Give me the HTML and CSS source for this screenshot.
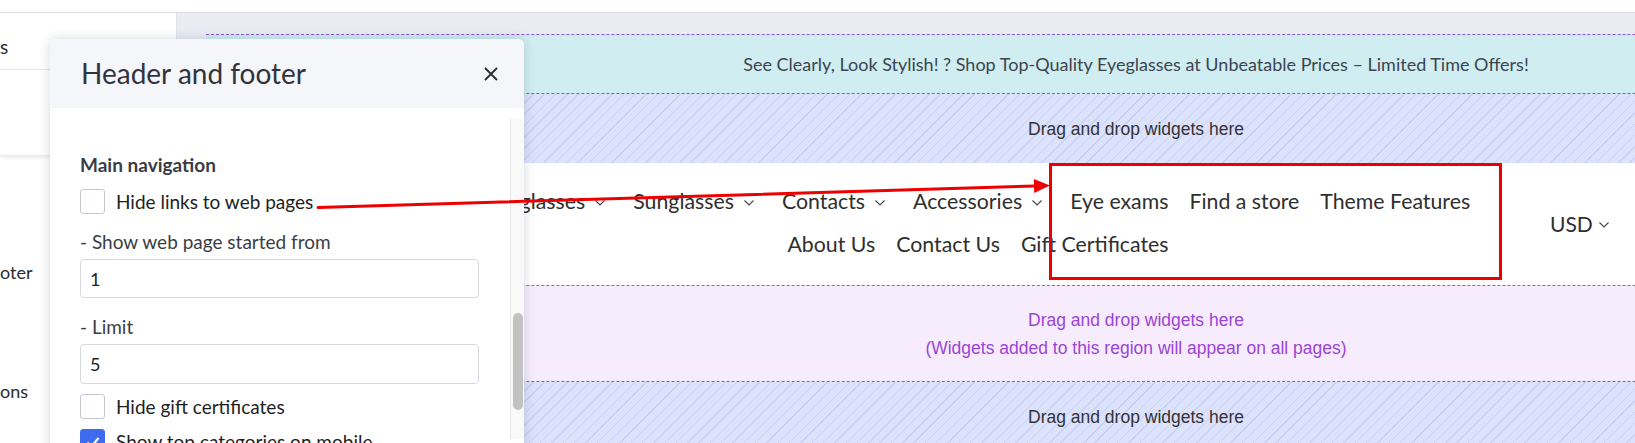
FILE: index.html
```html
<!DOCTYPE html>
<html lang="en">
<head>
<meta charset="utf-8">
<title>Page builder – Header and footer</title>
<link rel="stylesheet" href="styles.css">
</head>
<body>
<div class="app">
  <div class="topbar"></div>
  <div class="workspace">
    <aside class="sidebar">
      <div class="side-menu">
        <div class="side-menu-item">s</div>
      </div>
      <div class="side-list">
        <div class="side-link side-link-1">oter</div>
        <div class="side-link side-link-2">ons</div>
      </div>
    </aside>
    <main class="main">
      <div class="canvas">
        <div class="banner">See Clearly, Look Stylish! ? Shop Top-Quality Eyeglasses at Unbeatable Prices – Limited Time Offers!</div>
        <div class="dropzone dropzone-top">Drag and drop widgets here</div>
        <header class="site-header">
          <div class="logo-slot"></div>
          <nav class="site-nav">
            <a class="nav-item has-menu">Eyeglasses <svg class="chev" viewBox="0 0 10 6"><polyline points="0.5,0.5 5,5 9.5,0.5"/></svg></a>
            <a class="nav-item has-menu">Sunglasses <svg class="chev" viewBox="0 0 10 6"><polyline points="0.5,0.5 5,5 9.5,0.5"/></svg></a>
            <a class="nav-item has-menu">Contacts <svg class="chev" viewBox="0 0 10 6"><polyline points="0.5,0.5 5,5 9.5,0.5"/></svg></a>
            <a class="nav-item has-menu">Accessories <svg class="chev" viewBox="0 0 10 6"><polyline points="0.5,0.5 5,5 9.5,0.5"/></svg></a>
            <a class="nav-item">Eye exams</a>
            <a class="nav-item">Find a store</a>
            <a class="nav-item">Theme Features</a>
            <a class="nav-item">About Us</a>
            <a class="nav-item">Contact Us</a>
            <a class="nav-item">Gift Certificates</a>
          </nav>
          <div class="spacer"></div>
          <div class="currency">USD <svg class="chev" viewBox="0 0 10 6"><polyline points="0.5,0.5 5,5 9.5,0.5"/></svg></div>
        </header>
        <div class="dropzone dropzone-global">
          <div>Drag and drop widgets here</div>
          <div>(Widgets added to this region will appear on all pages)</div>
        </div>
        <div class="dropzone dropzone-bottom">Drag and drop widgets here</div>
      </div>
    </main>
  </div>

  <section class="modal">
    <div class="modal-head">
      <h2 class="modal-title">Header and footer</h2>
      <svg class="modal-close" viewBox="0 0 14 14"><path d="M1 1 L13 13 M13 1 L1 13"/></svg>
    </div>
    <div class="modal-body">
      <div class="modal-content">
        <div class="group-title">Main navigation</div>
        <label class="check-row check-row-1"><span class="checkbox"></span>Hide links to web pages</label>
        <div class="field-label field-label-1">- Show web page started from</div>
        <div class="input">1</div>
        <div class="field-label field-label-2">- Limit</div>
        <div class="input input-2">5</div>
        <label class="check-row check-row-2"><span class="checkbox"></span>Hide gift certificates</label>
        <label class="check-row check-row-3"><span class="checkbox checked"><svg viewBox="0 0 16 16"><polyline points="3,8.5 6.5,12 13,4.5"/></svg></span>Show top categories on mobile</label>
      </div>
      <div class="scroll-track"><div class="scroll-thumb"></div></div>
    </div>
  </section>

  <svg class="annotation" viewBox="0 0 1635 443" width="1635" height="443">
    <rect x="1050.5" y="164.5" width="450" height="114" fill="none" stroke="#ee0000" stroke-width="3"/>
    <line x1="318" y1="207.5" x2="1036" y2="186" stroke="#ee0000" stroke-width="3" stroke-linecap="round"/>
    <polygon points="1050,185.5 1033.8,179 1034.2,193" fill="#ee0000"/>
  </svg>
</div>
</body>
</html>
```

FILE: styles.css
```css
* { box-sizing: border-box; }

html, body {
  margin: 0;
  padding: 0;
}

body {
  width: 1635px;
  height: 443px;
  overflow: hidden;
  background: #ffffff;
  font-family: "Lato", "Noto Sans", sans-serif;
  color: #333;
}

.app {
  position: relative;
  width: 1635px;
  height: 443px;
  display: flex;
  flex-direction: column;
}

.topbar {
  height: 13px;
  flex: none;
  background: #ffffff;
  border-bottom: 1px solid #dcdde0;
}

.workspace {
  flex: 1;
  display: flex;
  min-height: 0;
}

/* sidebar */
.sidebar {
  width: 177px;
  flex: none;
  background: #ffffff;
  border-right: 1px solid #e1e3e8;
  overflow: hidden;
}

.side-menu {
  height: 143px;
  background: #fff;
  box-shadow: 0 2px 3px rgba(0, 0, 0, 0.07);
  border-bottom: 1px solid #ececec;
}

.side-menu-item {
  height: 57px;
  border-bottom: 1px solid #e6e7ea;
  padding-top: 22px;
  font-size: 19px;
  line-height: 24px;
  color: #2b2b2b;
}

.side-link {
  font-size: 18px;
  line-height: 24px;
  color: #2b2b2b;
}
.side-link-1 { margin-top: 104px; }
.side-link-2 { margin-top: 95px; }

/* main */
.main {
  flex: 1;
  background: #e9ecf3;
  overflow: hidden;
  padding: 21px 0 0 29px;
}

.canvas {
  width: 1860px;
}

.banner {
  height: 60px;
  background: #d0edf1;
  border-top: 1px dashed #8e55d0;
  border-bottom: 1px dashed #8e55d0;
  display: flex;
  align-items: center;
  justify-content: center;
  font-size: 18px;
  color: #3d4450;
}

.dropzone {
  display: flex;
  flex-direction: column;
  align-items: center;
  justify-content: center;
  font-family: "Liberation Sans", Arial, sans-serif;
  font-size: 17.5px;
  color: #333;
  background-color: #dce2fc;
  background-image: repeating-linear-gradient(135deg, transparent 0 7px, #c8d0f3 7px 8px);
}

.dropzone-top { height: 69px; padding-top: 2px; }

.dropzone-global {
  height: 97px;
  background: #f6ecfd;
  border-top: 1px dashed #a05ad6;
  border-bottom: 1px dashed #8e55d0;
  color: #9a45d4;
  line-height: 28px;
  padding-top: 1px;
}

.dropzone-bottom { height: 70px; }

/* site header */
.site-header {
  height: 122px;
  padding-bottom: 2px;
  background: #ffffff;
  display: grid;
  grid-template-columns: 252px 1040px 52px auto;
  align-items: center;
}

.site-nav {
  display: flex;
  flex-wrap: wrap;
  justify-content: center;
  column-gap: 21px;
  font-size: 21.3px;
  line-height: 43px;
  color: #333;
}

.nav-item {
  display: inline-flex;
  align-items: center;
  white-space: nowrap;
  color: #2f2f2f;
}

.chev {
  width: 10px;
  height: 6px;
  margin-left: 10px;
  margin-top: 3px;
  fill: none;
  stroke: #444;
  stroke-width: 1.1;
}

.has-menu .chev { margin-right: 7px; }

.currency {
  display: inline-flex;
  align-items: center;
  font-size: 21px;
  color: #2f2f2f;
}
.currency .chev { margin-left: 6px; }

/* modal */
.modal {
  position: absolute;
  left: 50px;
  top: 39px;
  width: 474px;
  height: 420px;
  background: #ffffff;
  border-radius: 6px 6px 0 0;
  box-shadow: 0 0 12px rgba(30, 40, 70, 0.18);
  overflow: hidden;
}

.modal-head {
  height: 69px;
  background: #f5f6fa;
  display: flex;
  align-items: center;
  justify-content: space-between;
  padding: 0 26px 0 31px;
}

.modal-title {
  margin: 0;
  font-weight: 400;
  font-size: 28px;
  color: #313440;
  padding-bottom: 1px;
}

.modal-close {
  width: 14px;
  height: 14px;
  fill: none;
  stroke: #2c2c2c;
  stroke-width: 1.8;
}

.modal-body {
  display: grid;
  grid-template-columns: 1fr 14px;
}

.modal-content {
  padding: 45px 31px 0 30px;
  font-size: 19px;
  line-height: 24px;
  color: #222;
}

.group-title {
  font-weight: 700;
  font-size: 19px;
  color: #3a3d46;
}

.check-row {
  display: flex;
  align-items: center;
  gap: 11px;
  height: 25px;
  color: #1e1e1e;
}
.check-row-1 { margin-top: 12px; }
.check-row-2 { margin-top: 10px; }
.check-row-3 { margin-top: 10px; }

.checkbox {
  width: 25px;
  height: 25px;
  flex: none;
  border: 1px solid #c3c7ce;
  border-radius: 3px;
  background: #fff;
}

.checkbox.checked {
  background: #3d6cf0;
  border-color: #3d6cf0;
  display: flex;
  align-items: center;
  justify-content: center;
}
.checkbox.checked svg {
  width: 18px;
  height: 18px;
  fill: none;
  stroke: #fff;
  stroke-width: 2;
}

.field-label {
  color: #3a3d46;
}
.field-label-1 { margin-top: 16px; }
.field-label-2 { margin-top: 17px; }

.input {
  margin-top: 5px;
  height: 39px;
  border: 1px solid #d6d9df;
  border-radius: 4px;
  display: flex;
  align-items: center;
  padding: 0 9px;
  font-size: 18px;
  color: #1e1e1e;
}
.input-2 { height: 40px; }

.scroll-track {
  margin-top: 11px;
  height: 320px;
  background: #f9f9f9;
  border-left: 1px solid #e6e6e6;
  position: relative;
}

.scroll-thumb {
  position: absolute;
  left: 2px;
  top: 194px;
  width: 10px;
  height: 97px;
  border-radius: 5px;
  background: #c2c2c2;
}

.annotation {
  position: absolute;
  left: 0;
  top: 0;
  pointer-events: none;
}
```
